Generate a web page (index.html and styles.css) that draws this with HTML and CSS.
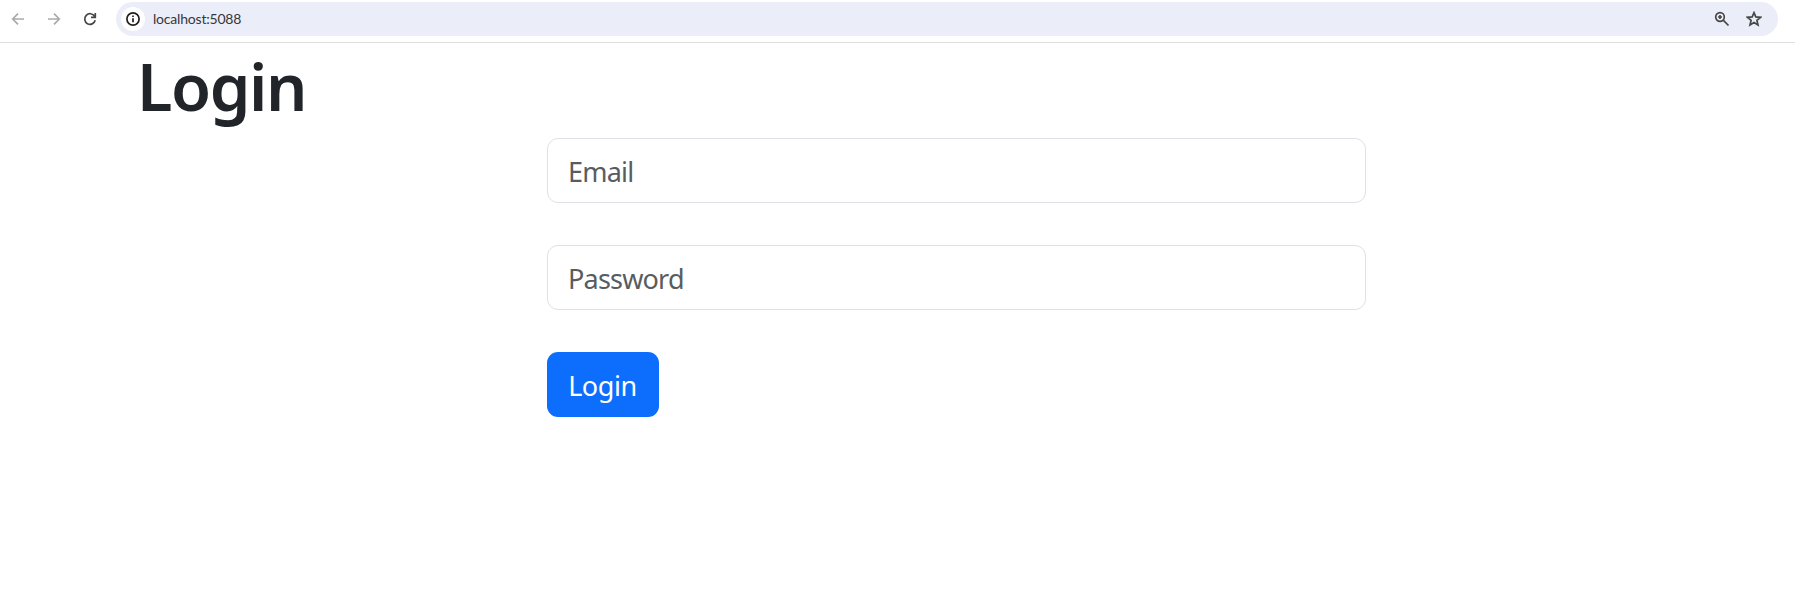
FILE: index.html
```html
<!DOCTYPE html>
<html lang="en">
<head>
<meta charset="utf-8">
<title>Login</title>
<link rel="stylesheet" href="styles.css">
</head>
<body>
<header class="toolbar">
  <div class="nav">
    <svg class="icon muted" viewBox="0 0 16 16"><path d="M14 8H3.500M8 2.700 2.700 8 8 13.300"/></svg>
    <svg class="icon muted" viewBox="0 0 16 16"><path d="M2 8h10.500M8 2.700 13.300 8 8 13.300"/></svg>
    <svg class="icon" viewBox="0 0 16 16"><path d="M12.600 5.300A5.300 5.300 0 1 0 13.200 9.300M13.300 2v4.300H9"/></svg>
  </div>
  <div class="address">
    <span class="site-info"><svg class="icon info" viewBox="0 0 16 16"><circle cx="8" cy="8" r="6.1"/><path d="M8 7.200v4M8 4.600v1.500"/></svg></span>
    <span class="url">localhost:5088</span>
    <svg class="icon action" viewBox="0 0 16 16"><circle cx="6" cy="6" r="4.3"/><path d="M9.200 9.200 14.500 14.500M6 4v4M4 6h4"/></svg>
    <svg class="icon action" viewBox="0 0 16 16"><path d="m8 1.700 1.800 4.200 4.700.4-3.600 3.100 1.100 4.600L8 11.500l-4 2.500 1.100-4.600-3.600-3.100 4.700-.4z"/></svg>
  </div>
</header>
<main class="page">
  <h1 class="title">Login</h1>
  <form class="form">
    <input class="field" type="text" placeholder="Email">
    <input class="field" type="password" placeholder="Password">
    <button class="submit" type="button">Login</button>
  </form>
</main>
</body>
</html>
```

FILE: styles.css
```css
* { box-sizing: border-box; }
body {
  margin: 0;
  background: #fff;
  color: #212529;
  font-family: "Noto Sans", sans-serif;
  overflow: hidden;
}
.toolbar {
  display: flex;
  align-items: flex-start;
  height: 43px;
  padding: 2px 17px 0 10px;
  border-bottom: 1px solid #dedfe0;
}
.nav {
  display: flex;
  align-items: center;
  gap: 20px;
  width: 106px;
  height: 34px;
}
.icon {
  width: 16px;
  height: 16px;
  flex: none;
  fill: none;
  stroke: #474747;
  stroke-width: 1.7;
}
.muted { stroke: #ababab; }
.address {
  display: flex;
  align-items: center;
  flex: 1;
  height: 34px;
  padding: 0 16px 0 5px;
  border-radius: 17px;
  background: #ebeef8;
}
.site-info {
  display: grid;
  place-items: center;
  width: 24px;
  height: 24px;
  border-radius: 50%;
  background: #fff;
}
.info { stroke: #1f1f1f; }
.url {
  flex: 1;
  margin-left: 8px;
  font: 14px/20px Lato, sans-serif;
  letter-spacing: -0.2px;
  color: #36373a;
}
.action { margin-left: 16px; }
.page { padding: 8px 0 0 137px; }
.title {
  height: 87px;
  margin: 0;
  font-size: 65px;
  font-weight: 600;
  line-height: 70px;
  letter-spacing: -1.4px;
}
.form {
  display: flex;
  flex-direction: column;
  align-items: flex-start;
  gap: 42px;
  margin-left: 410px;
}
.field {
  width: 819px;
  height: 65px;
  padding: 2px 20px 0;
  border: 1px solid #dee2e6;
  border-radius: 11px;
  background: #fff;
  font: 27px/42px "Noto Sans", sans-serif;
  letter-spacing: -0.8px;
}
.field::placeholder { color: #595c5f; opacity: 1; }
.submit {
  width: 112px;
  height: 65px;
  padding: 2px 1px 0 0;
  border: 0;
  border-radius: 11px;
  background: #0d6efd;
  color: #fff;
  font: 27px/42px "Noto Sans", sans-serif;
  letter-spacing: -0.4px;
}
```
